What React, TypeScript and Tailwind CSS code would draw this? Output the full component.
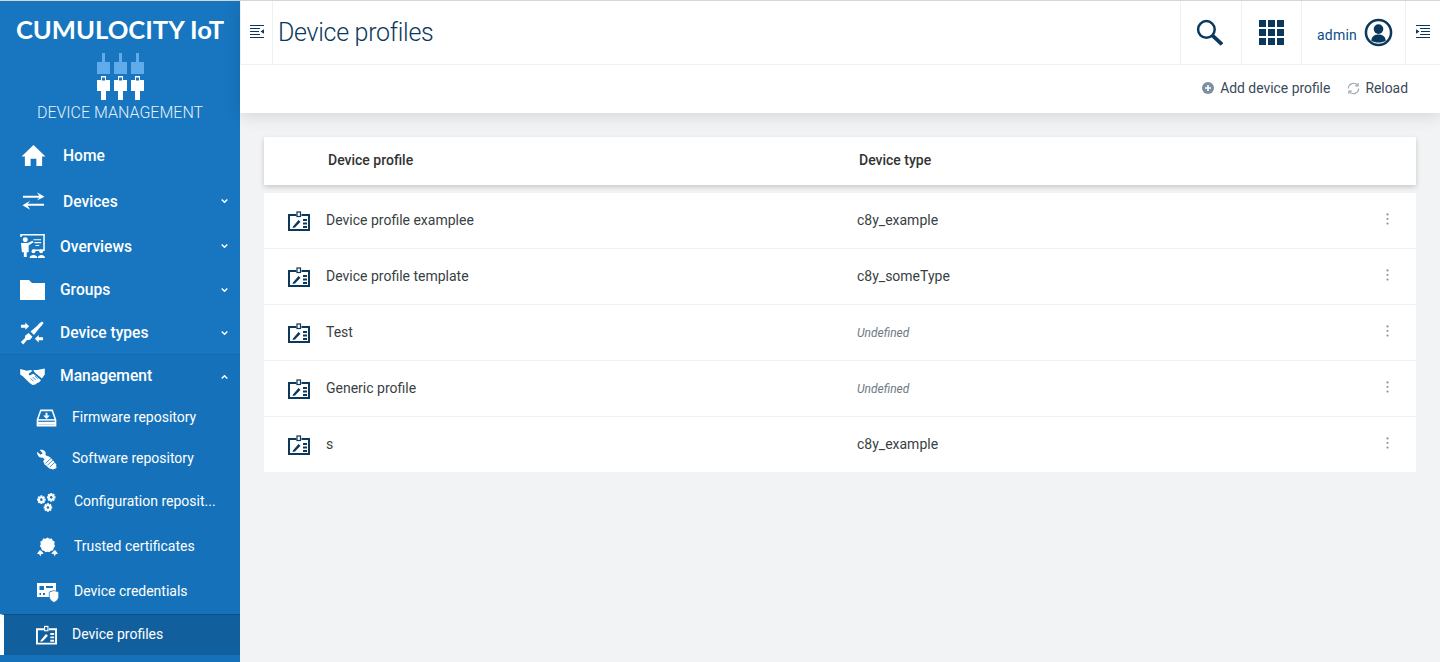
import React from "react";

type IconProps = { className?: string };

const Home = ({ className }: IconProps) => (
  <svg viewBox="0 0 26 24" className={className} fill="currentColor"><path d="M13 1 L25.5 13 L22 13 L22 23 L16 23 L16 15.5 L10 15.5 L10 23 L4 23 L4 13 L.5 13 Z" /></svg>
);
const Arrows = ({ className }: IconProps) => (
  <svg viewBox="0 0 24 20" className={className} fill="currentColor"><path d="M1 4.4 H18 L15.5 .8 L23.5 5.5 L15.5 9.5 L18 6.6 H1 Z M23 12.8 H6 L8.5 9.8 L.5 14.5 L8.5 19 L6 15 H23 Z" /></svg>
);
const Overview = ({ className }: IconProps) => (
  <svg viewBox="0 0 26 25" className={className}>
    <path d="M1 3 V.8 H25 V17 H14" fill="none" stroke="currentColor" strokeWidth="1.6" />
    <path d="M14 6 H22 M15 9 H22 M16 12 H20" stroke="currentColor" strokeWidth="1.2" />
    <circle cx="5.5" cy="6" r="2.6" fill="currentColor" />
    <path d="M1 9.5 H8 L13 7 L14 8.5 L9 12 V19 H7 V24 H4 V19 H2 Z" fill="currentColor" />
    <circle cx="14" cy="18" r="2" fill="currentColor" /><path d="M10 25 C10 21 18 21 18 25Z" fill="currentColor" />
    <circle cx="22" cy="18" r="2" fill="currentColor" /><path d="M18.5 25 C18.5 21 26 21 26 25Z" fill="currentColor" />
  </svg>
);
const Folder = ({ className }: IconProps) => (
  <svg viewBox="0 0 25 20" className={className} fill="currentColor"><path d="M0 0 H9 L12 3 H25 V20 H0 Z" /></svg>
);
const Plugs = ({ className }: IconProps) => (
  <svg viewBox="0 0 25 25" className={className} fill="currentColor">
    <path d="M11 11 L18 5 L20 2.5 L23 .5 L24.5 2 L22.5 5 L20.5 7 L14.5 14.5 Z" />
    <path d="M9 12.5 L13 16.5 L10.5 19.5 L7 20 L3.5 24.5 L.8 22 L5 18 L5.5 15 Z" />
    <path d="M1 4 H5.5 V1.5 L9.5 5.5 L5.5 9 V7 H1 Z M24 17 H19.5 V14.5 L15.5 18.5 L19.5 22.5 V20 H24 Z" />
  </svg>
);
const Hands = ({ className }: IconProps) => (
  <svg viewBox="0 0 26 18" className={className} fill="currentColor">
    <path d="M0 1 L7 3 L11 2 L13 3 L9 6 C9 8 11 8 12 7 L14 6 L22 13 L20 15 L18 16 L16 17.5 L13 18 L10 16 L7 13 L3 9 L0 7 Z" />
    <path d="M14 2 L18 2 L26 0.5 V7 L23 11 L15 4.5 Z" />
    <path d="M11 11 L14 14 M13 9.5 L16.5 13 M15.5 8.5 L18.5 11.5" stroke="#1572ba" strokeWidth=".8" />
  </svg>
);
const Inbox = ({ className }: IconProps) => (
  <svg viewBox="0 0 22 18" className={className}>
    <path d="M5 1 H17 L20.5 11 V17 H1.5 V11 Z" fill="none" stroke="currentColor" strokeWidth="1.6" />
    <path d="M1.5 11 H20.5" stroke="currentColor" strokeWidth="1.6" />
    <path d="M10 3.5 H12 V6.5 H14.5 L11 10 L7.5 6.5 H10 Z" fill="currentColor" />
    <path d="M2 13 H20 V16 H2Z" fill="currentColor" />
  </svg>
);
const Wrench = ({ className }: IconProps) => (
  <svg viewBox="0 0 22 22" className={className} fill="currentColor">
    <path d="M1 3 L5 6 L7 4.5 L4 1 C8 0 11 3 10 6 L12 8 L9 11 L7 9 C4 10 1 7 1 3Z" />
    <path d="M12 7 L15 9 L18 12 L21 16 L21.5 20 L18 21.5 L14 20.5 L9 16 L7.5 12.5 Z" />
    <path d="M10 15 L16 9.5 M12 17 L18 11.5 M14.5 19 L19.5 14" stroke="#1572ba" strokeWidth=".8" />
  </svg>
);
const Gear = ({ cx, cy, r }: { cx: number; cy: number; r: number }) => (
  <g>
    {[0, 45, 90, 135].map((a) => (
      <rect key={a} x={cx - 1.1} y={cy - r - 1.3} width="2.2" height={2 * r + 2.6} fill="currentColor" transform={`rotate(${a} ${cx} ${cy})`} />
    ))}
    <circle cx={cx} cy={cy} r={r * 0.72} fill="none" stroke="currentColor" strokeWidth={r * 0.65} />
    <circle cx={cx} cy={cy} r={r * 0.42} fill="#1572ba" />
  </g>
);
const Gears = ({ className }: IconProps) => (
  <svg viewBox="0 0 20 20" className={className}>
    <Gear cx={4.6} cy={7} r={3.2} />
    <Gear cx={15} cy={4.6} r={3.2} />
    <Gear cx={11.5} cy={15.2} r={3.2} />
  </svg>
);
const Badge = ({ className }: IconProps) => (
  <svg viewBox="0 0 22 21" className={className} fill="currentColor">
    <path d="M11 0 L13 1.4 L15.5 1 L16.5 3.2 L18.6 4.4 L18 7 L19 9 L17.5 11 L17 13.4 L14.6 14 L13 15.6 L11 15 L9 15.6 L7.4 14 L5 13.4 L4.5 11 L3 9 L4 7 L3.4 4.4 L5.5 3.2 L6.5 1 L9 1.4 Z" />
    <path d="M3 13 L5.5 15 L7 17 L4.5 17.2 L3.5 20 L2.5 17.5 L0 17 Z M19 13 L16.5 15 L15 17 L17.5 17.2 L18.5 20 L19.5 17.5 L22 17 Z" />
  </svg>
);
const Cred = ({ className }: IconProps) => (
  <svg viewBox="0 0 22 21" className={className} fill="currentColor">
    <path fillRule="evenodd" d="M0 1 H19 V9 H13 V15 H0 Z M2.5 4 V8 H7 V4 Z M9 4 V6 H16 V4 Z M2.5 11 V13 H4 V11 Z M6 11 V13 H8 V11 Z" />
    <path d="M17 8.5 L21.7 10 V14.5 C21.7 17 20 19 17 20.5 C14 19 12.3 17 12.3 14.5 V10 Z" stroke="#1572ba" strokeWidth=".7" />
  </svg>
);
const Profile = ({ className }: IconProps) => (
  <svg viewBox="0 0 22 20" className={className}>
    <path d="M8.5 4 H1 V19 H21 V4 H13.5" fill="none" stroke="currentColor" strokeWidth="2" />
    <rect x="9" y="1" width="3.5" height="4.5" fill="none" stroke="currentColor" strokeWidth="1.2" />
    <path d="M5 15.5 L10.5 9 L12.5 10.8 L7 16.5 L4.5 17 Z" fill="currentColor" />
    <path d="M15 8 H19 V10 H15Z M15 11.5 H19 V13.5 H15Z M15 15 H19 V17 H15Z" fill="currentColor" />
  </svg>
);
const Logo = () => (
  <svg viewBox="0 0 47 47" className="h-[47px] w-[47px]">
    {[0, 17, 34].map((x) => (
      <g key={x}>
        <rect x={x + 5} y="0" width="3" height="9" fill="#5fabec" />
        <rect x={x} y="9" width="13" height="12" fill="#5fabec" />
        <path d={`M${x} 27 H${x + 4} V23 H${x + 9} V27 H${x + 13} V38 H${x + 9} V47 H${x + 4} V38 H${x} Z`} fill="#fff" />
        <rect x={x + 5} y="24.5" width="3" height="3" fill="#1776bf" />
      </g>
    ))}
  </svg>
);
const Chevron = ({ up }: { up?: boolean }) => (
  <svg viewBox="0 0 7 5" className={`absolute right-[12px] top-1/2 h-[5px] w-[7px] -translate-y-1/2 ${up ? "rotate-180" : ""}`} fill="none" stroke="#fff" strokeWidth="1.5"><path d="M.7 1 L3.5 3.8 L6.3 1" /></svg>
);
const Collapse = ({ flip }: { flip?: boolean }) => (
  <svg viewBox="0 0 14 13" className={`mb-[3px] h-[13px] w-[14px] text-[#0b385b] ${flip ? "-scale-x-100" : ""}`} fill="currentColor">
    <path d="M0 0 H14 V1 H0Z M0 3 H10 V4 H0Z M0 6 H9 V7 H0Z M0 9 H10 V10 H0Z M0 12 H14 V13 H0Z M14 4.2 V8.8 L10.5 6.5Z" />
  </svg>
);

function NavItem({ icon, label, h, pl, chevron, up, textClass }: { icon: React.ReactNode; label: string; h: string; pl: string; chevron?: boolean; up?: boolean; textClass?: string }) {
  return (
    <div className={`relative flex items-center shrink-0 ${h}`}>
      <div className={`flex items-center ${pl}`}>{icon}</div>
      <span className={`text-[15.6px] font-medium ${textClass ?? ""}`}>{label}</span>
      {chevron && <Chevron up={up} />}
    </div>
  );
}
function SubItem({ icon, label, h, gap, extra }: { icon: React.ReactNode; label: string; h: string; gap: string; extra?: string }) {
  return (
    <div className={`relative flex items-center shrink-0 ${h} ${extra ?? ""}`}>
      <div className={`flex items-center ${gap}`}>{icon}</div>
      <span className="pb-[2px] text-[14px] font-normal whitespace-nowrap">{label}</span>
    </div>
  );
}

const rows = [
  { name: "Device profile examplee", type: "c8y_example" },
  { name: "Device profile template", type: "c8y_someType" },
  { name: "Test", type: null },
  { name: "Generic profile", type: null },
  { name: "s", type: "c8y_example" },
];

export default function App() {
  return (
    <div className="flex h-[662px] w-[1440px] overflow-hidden bg-[#f2f3f4] text-[#333] [font-family:Roboto,'Liberation_Sans',sans-serif]">
      <aside className="flex w-[240px] shrink-0 flex-col border-t border-[#d6d6d6] bg-[#1776bf] text-white">
        <div className="flex h-[132px] shrink-0 flex-col items-center">
          <div className="mt-[11px] text-[25.6px] leading-[34px] font-bold [font-family:Lato,Roboto,sans-serif] whitespace-nowrap">CUMULOCITY IoT</div>
          <div className="mt-[7px]"><Logo /></div>
          <div className="mt-[3px] text-[16px] leading-[20px] font-light text-[#e4f1fb]">DEVICE MANAGEMENT</div>
        </div>
        <NavItem h="h-[45px]" pl="w-[63px] pl-[21px]" label="Home" textClass="pt-[2px]" icon={<Home className="h-[23px] w-[25px]" />} />
        <NavItem h="h-[46px]" pl="w-[63px] pl-[22px]" label="Devices" chevron textClass="pt-[4px]" icon={<Arrows className="h-[20px] w-[23px]" />} />
        <NavItem h="h-[44px]" pl="w-[60px] pl-[20px]" label="Overviews" chevron textClass="pt-[4px]" icon={<Overview className="h-[24px] w-[25px]" />} />
        <NavItem h="h-[43px]" pl="w-[60px] pl-[20px]" label="Groups" chevron textClass="pt-[2px]" icon={<Folder className="h-[20px] w-[25px]" />} />
        <NavItem h="h-[43px]" pl="w-[60px] pl-[20px]" label="Device types" chevron textClass="pt-[2px]" icon={<Plugs className="h-[24px] w-[24px]" />} />
        <div className="flex flex-col bg-[#1572ba] border-t border-[#146cb0]">
          <NavItem h="h-[43px]" pl="w-[60px] pl-[20px]" label="Management" chevron up icon={<Hands className="h-[17px] w-[25px]" />} />
          <SubItem h="h-[40px]" gap="w-[72px] pl-[36px]" label="Firmware repository" icon={<Inbox className="h-[18px] w-[21px]" />} />
          <SubItem h="h-[42px]" gap="w-[72px] pl-[36px]" label="Software repository" icon={<Wrench className="h-[21px] w-[21px]" />} />
          <SubItem h="h-[44px]" gap="w-[74px] pl-[37px]" label="Configuration reposit..." icon={<Gears className="h-[19px] w-[19px]" />} />
          <SubItem h="h-[46px]" gap="w-[74px] pl-[37px]" label="Trusted certificates" icon={<Badge className="h-[21px] w-[21px]" />} />
          <SubItem h="h-[44px]" gap="w-[74px] pl-[37px]" label="Device credentials" icon={<Cred className="h-[21px] w-[22px]" />} />
          <SubItem h="h-[41px]" gap="w-[68px] pl-[32px]" label="Device profiles" extra="bg-[#125f9e] border-t border-[#0f4f85] border-l-4 border-l-white" icon={<Profile className="h-[20px] w-[21px]" />} />
        </div>
        <div className="flex-1 bg-[#1572ba]" />
      </aside>

      <main className="flex min-w-0 flex-1 flex-col">
        <div className="relative z-10 bg-white shadow-[0_3px_16px_rgba(0,0,0,0.12)]">
          <header className="flex h-[65px] items-stretch border-t border-b border-t-[#d6d6d6] border-b-[#f0f0f0]">
            <div className="flex w-[33px] items-center justify-center border-r border-l border-[#f0f0f0]"><Collapse /></div>
            <h1 className="flex-1 pl-[5px] text-[25px] leading-[63px] font-light tracking-[-0.3px] text-[#0b385b]">Device profiles</h1>
            <div className="flex w-[61px] items-center justify-center border-l border-[#f0f0f0] pr-[3px]">
              <svg viewBox="0 0 26 26" className="h-[27px] w-[27px] text-[#0b385b]" fill="none" stroke="currentColor"><circle cx="10" cy="10" r="8" strokeWidth="2.4" /><path d="M16 16 L25 24.5" strokeWidth="3.6" /></svg>
            </div>
            <div className="flex w-[60px] items-center justify-center border-l border-[#f0f0f0]">
              <div className="grid grid-cols-3 gap-[2px]">
                {Array.from({ length: 9 }).map((_, i) => <div key={i} className="h-[7px] w-[7px] bg-[#0b385b]" />)}
              </div>
            </div>
            <div className="flex w-[105px] items-center gap-[7px] border-l border-r border-[#f0f0f0] pl-[15px]">
              <span className="text-[14px] tracking-[0.2px] text-[#0b4f85] pt-[5px]">admin</span>
              <svg viewBox="0 0 30 30" className="h-[29px] w-[29px] text-[#0b385b]"><circle cx="15" cy="15" r="13" fill="none" stroke="currentColor" strokeWidth="2.6" /><circle cx="15" cy="11.5" r="5" fill="currentColor" /><path d="M7.5 23.5 C8 18 12 17 15 17 C18 17 22 18 22.5 23.5 C19 26 11 26 7.5 23.5Z" fill="currentColor" /></svg>
            </div>
            <div className="flex w-[34px] items-center justify-center"><Collapse flip /></div>
          </header>
          <div className="flex h-[48px] items-center justify-end gap-[17px] pr-[32px] pb-[1px] text-[13.9px] text-[#3a4a5a]">
            <div className="flex items-center gap-[6px]">
              <svg viewBox="0 0 12 12" className="h-[12px] w-[12px]"><circle cx="6" cy="6" r="6" fill="#7c8f9f" /><path d="M3 6 H9 M6 3 V9" stroke="#fff" strokeWidth="1.6" /></svg>
              <span>Add device profile</span>
            </div>
            <div className="flex items-center gap-[5px]">
              <svg viewBox="0 0 14 14" className="h-[13px] w-[13px]" fill="none" stroke="#9aa8b4" strokeWidth="1.2"><path d="M1.5 7 A5.5 5.5 0 0 1 11.5 3.8 M12.5 7 A5.5 5.5 0 0 1 2.5 10.2" /><path d="M12 1 V4.2 H8.8 M2 13 V9.8 H5.2" /></svg>
              <span>Reload</span>
            </div>
          </div>
        </div>

        <div className="flex flex-col px-[24px] pt-[24px]">
          <div className="flex h-[48px] items-center bg-white pb-[1px] text-[14px] font-medium text-[#333] shadow-[0_2px_5px_rgba(0,0,0,0.18)]">
            <div className="w-[595px] pl-[64px]">Device profile</div>
            <div>Device type</div>
          </div>
          <div className="mt-[8px] flex flex-col bg-white">
            {rows.map((r, i) => (
              <div key={i} className={`flex items-center text-[14px] text-[#3a3f44] ${i < 4 ? "h-[56px] border-b border-[#f0f1f2]" : "h-[55px]"}`}>
                <div className="w-[62px] pl-[24px] text-[#0b385b]"><Profile className="h-[20px] w-[22px]" /></div>
                <div className="w-[531px]">{r.name}</div>
                {r.type
                  ? <div className="flex-1">{r.type}</div>
                  : <div className="flex-1 pt-[1px] text-[12px] italic text-[#6d7a86]">Undefined</div>}
                <svg viewBox="0 0 3 13" className="mr-[27px] mb-[4px] h-[12px] w-[3px]" fill="#8a98a5"><circle cx="1.5" cy="1.5" r="1.2" /><circle cx="1.5" cy="6.5" r="1.2" /><circle cx="1.5" cy="11.5" r="1.2" /></svg>
              </div>
            ))}
          </div>
        </div>
      </main>
    </div>
  );
}
